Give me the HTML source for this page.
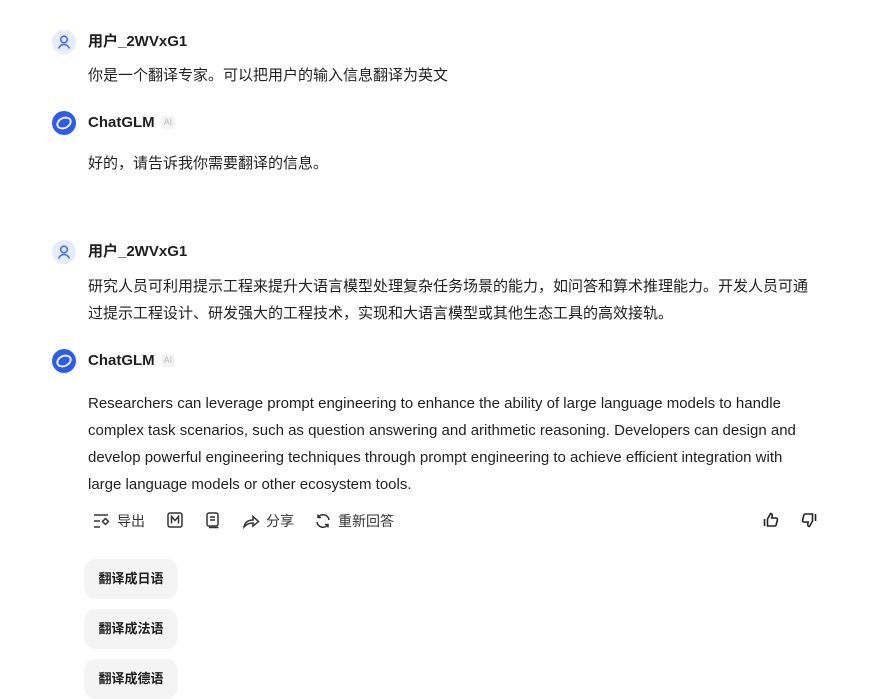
<!DOCTYPE html>
<html><head><meta charset="utf-8"><style>
body{margin:0;width:892px;height:698px;overflow:hidden;background:#fff;font-family:"Liberation Sans","Noto Sans CJK SC",sans-serif;color:#1f1f1f;position:relative}
.av{position:absolute;left:52px;width:24px;height:24px;border-radius:50%}
.u{background:#e4ecfd}
.g{background:#2a5bf6}
.nm{position:absolute;left:88px;font-size:15px;font-weight:bold;line-height:20px}
.ai{display:inline-block;font-size:9px;color:#bbb;background:#f3f3f3;border-radius:3px;padding:0 3px;margin-left:6px;font-weight:normal;vertical-align:2px;line-height:13px}
.t{position:absolute;left:88px;font-size:15px;line-height:27px;width:740px}
.btn{position:absolute;left:84px;width:94px;height:40px;border-radius:12px;background:#f4f4f5;font-size:13px;font-weight:bold;line-height:40px;text-align:center}
.tb{position:absolute;top:511px;font-size:14px;line-height:20px;display:flex;align-items:center;gap:6px;color:#333}
svg{display:block}
</style></head><body>
<div class="av u" style="top:30px"><svg width="24" height="24" viewBox="0 0 24 24" fill="none" stroke="#3f6ff5" stroke-width="1.6"><circle cx="12" cy="9.5" r="3.3"/><path d="M6.5 18.5c1.5-3 3.5-4 5.5-4s4 1 5.5 4"/></svg></div>
<div class="nm" style="top:32px">用户_2WVxG1</div>
<div class="t" style="top:62px">你是一个翻译专家。可以把用户的输入信息翻译为英文</div>
<div class="av g" style="top:111px"><svg width="24" height="24" viewBox="0 0 24 24" fill="none" stroke="#fff" stroke-width="1.8"><ellipse cx="12" cy="12" rx="7" ry="5" transform="rotate(-25 12 12)"/></svg></div>
<div class="nm" style="top:113px">ChatGLM<span class="ai">AI</span></div>
<div class="t" style="top:150px">好的，请告诉我你需要翻译的信息。</div>
<div class="av u" style="top:240px"><svg width="24" height="24" viewBox="0 0 24 24" fill="none" stroke="#3f6ff5" stroke-width="1.6"><circle cx="12" cy="9.5" r="3.3"/><path d="M6.5 18.5c1.5-3 3.5-4 5.5-4s4 1 5.5 4"/></svg></div>
<div class="nm" style="top:242px">用户_2WVxG1</div>
<div class="t" style="top:273px;width:734px">研究人员可利用提示工程来提升大语言模型处理复杂任务场景的能力，如问答和算术推理能力。开发人员可通过提示工程设计、研发强大的工程技术，实现和大语言模型或其他生态工具的高效接轨。</div>
<div class="av g" style="top:349px"><svg width="24" height="24" viewBox="0 0 24 24" fill="none" stroke="#fff" stroke-width="1.8"><ellipse cx="12" cy="12" rx="7" ry="5" transform="rotate(-25 12 12)"/></svg></div>
<div class="nm" style="top:351px">ChatGLM<span class="ai">AI</span></div>
<div class="t" style="top:390px;width:720px">Researchers can leverage prompt engineering to enhance the ability of large language models to handle complex task scenarios, such as question answering and arithmetic reasoning. Developers can design and develop powerful engineering techniques through prompt engineering to achieve efficient integration with large language models or other ecosystem tools.</div>
<div class="tb" style="left:93px"><svg width="18" height="18" viewBox="0 0 18 18" fill="none" stroke="#333" stroke-width="1.5"><path d="M1 3h14M1 9h6M1 15h6"/><path d="M12.5 6.5l3 3-3 3-3-3z"/></svg>导出</div>
<div class="tb" style="left:166px"><svg width="18" height="18" viewBox="0 0 18 18" fill="none" stroke="#333" stroke-width="1.5"><rect x="2" y="2" width="14" height="14" rx="2"/><path d="M5.5 12.5V5.5l3.5 4 3.5-4v7"/></svg></div>
<div class="tb" style="left:204px"><svg width="18" height="18" viewBox="0 0 18 18" fill="none" stroke="#333" stroke-width="1.5"><rect x="3" y="2" width="11" height="13" rx="2"/><path d="M6 6h5M6 9h5M5 16.5h9.5"/></svg></div>
<div class="tb" style="left:242px"><svg width="18" height="18" viewBox="0 0 18 18" fill="none" stroke="#333" stroke-width="1.5"><path d="M2 15c1-5 4-7 9-7V4.5l5.5 5L11 14v-3c-4 0-6 1-9 4z"/></svg>分享</div>
<div class="tb" style="left:314px"><svg width="18" height="18" viewBox="0 0 18 18" fill="none" stroke="#333" stroke-width="1.6"><path d="M15 8a6 6 0 0 0-11-2.5M3 10a6 6 0 0 0 11 2.5M4 2.5v3h3M14 15.5v-3h-3"/></svg>重新回答</div>
<div class="tb" style="left:762px"><svg width="18" height="18" viewBox="0 0 18 18" fill="none" stroke="#222" stroke-width="1.6"><path d="M2.5 8v7M5.5 8l3-5.5c1.5 0 2 1 1.7 2.5L9.8 7H14c1 0 1.7 1 1.4 2l-1.3 5c-.2.7-.8 1-1.5 1H5.5z"/></svg></div>
<div class="tb" style="left:800px"><svg width="18" height="18" viewBox="0 0 18 18" fill="none" stroke="#222" stroke-width="1.6"><path d="M15.5 10V3M12.5 10l-3 5.5c-1.5 0-2-1-1.7-2.5L8.2 11H4c-1 0-1.7-1-1.4-2l1.3-5c.2-.7.8-1 1.5-1h7.1z"/></svg></div>
<div class="btn" style="top:559px">翻译成日语</div>
<div class="btn" style="top:609px">翻译成法语</div>
<div class="btn" style="top:659px">翻译成德语</div>
</body></html>
